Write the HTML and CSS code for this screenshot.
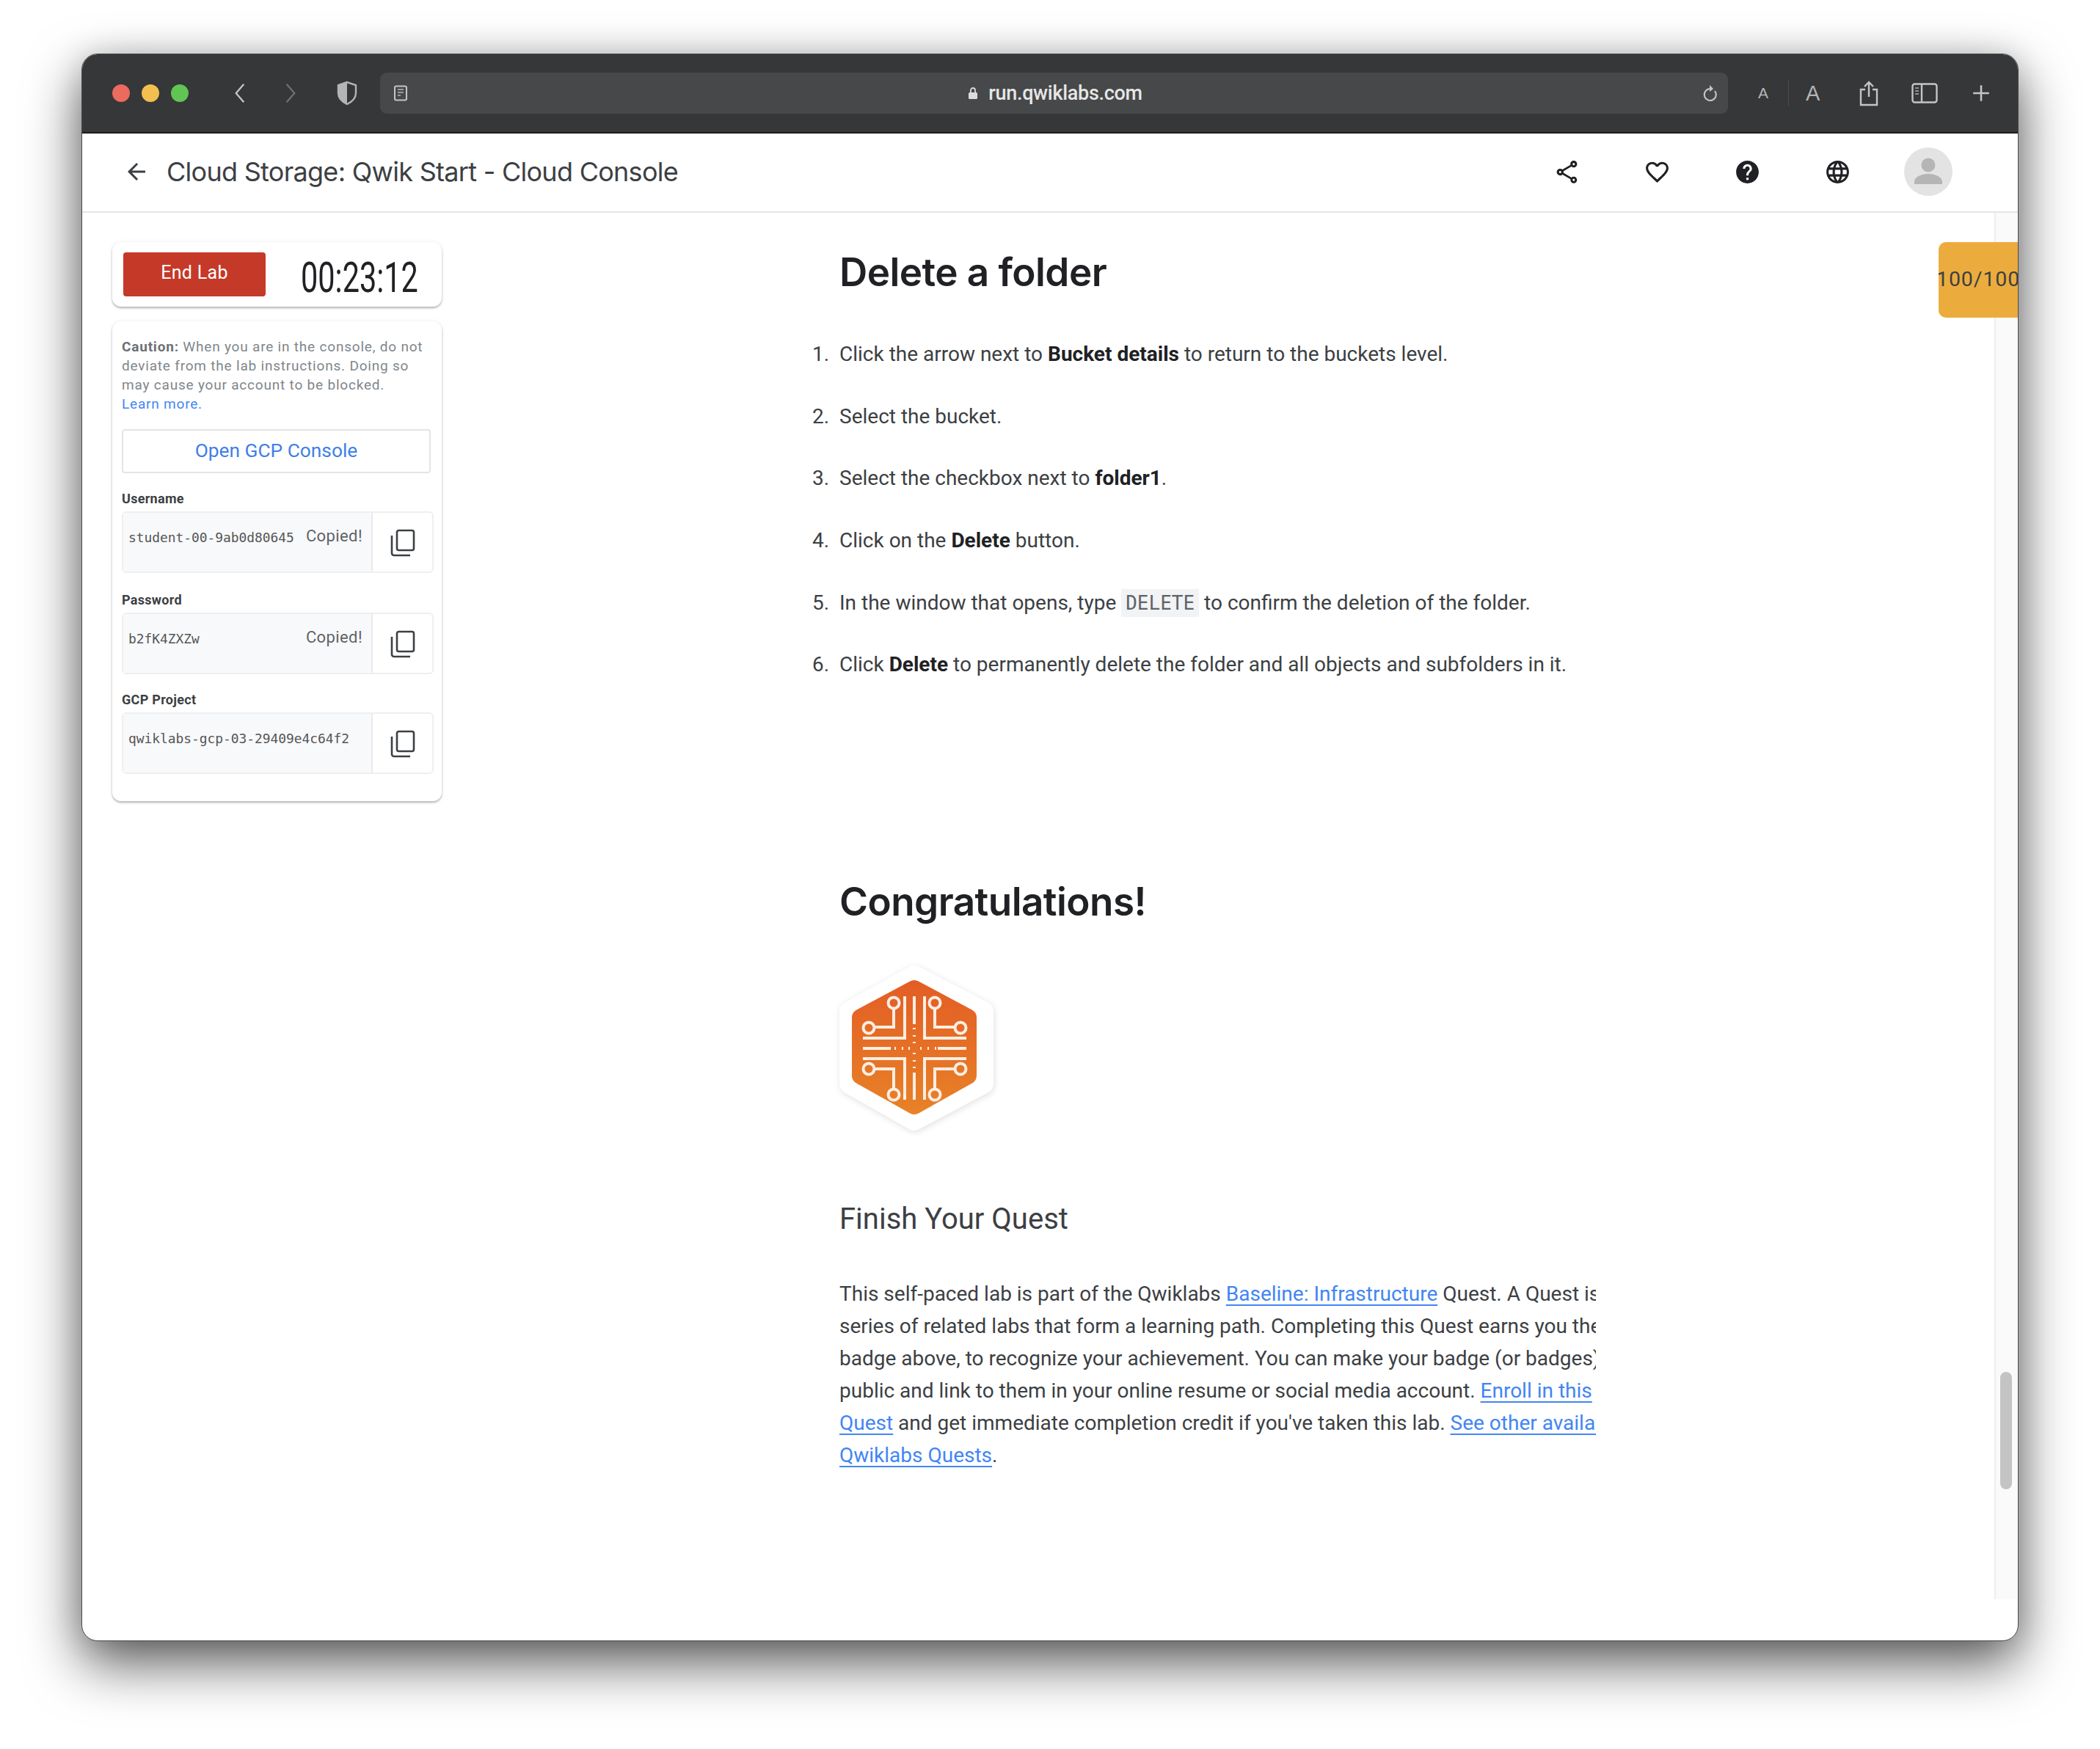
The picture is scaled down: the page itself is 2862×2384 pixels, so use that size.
FILE: index.html
```html
<!DOCTYPE html>
<html lang="en">
<head>
    <meta charset="UTF-8">
    <title>Cloud Storage: Qwik Start - Cloud Console</title>
    <link rel="stylesheet" href="styles.css">
</head>
<body>
<div class="window">
    <!-- Safari toolbar -->
    <div class="toolbar">
        <div class="lights">
            <span class="light red"></span>
            <span class="light yellow"></span>
            <span class="light green"></span>
        </div>
        <svg class="nav-btn" viewBox="0 0 20 34"><path d="M16 3 4 17l12 14" fill="none" stroke="#c4c5c6" stroke-width="2.6"/></svg>
        <svg class="nav-btn next" viewBox="0 0 20 34"><path d="M4 3l12 14L4 31" fill="none" stroke="#6e6f70" stroke-width="2.6"/></svg>
        <svg class="shield" viewBox="0 0 30 34"><path d="M15 2 3 6v11c0 8 6 12 12 15 6-3 12-7 12-15V6z" fill="none" stroke="#b4b5b6" stroke-width="2.4"/><path d="M15 2 3 6v11c0 8 6 12 12 15z" fill="#b4b5b6"/></svg>
        <div class="address">
            <svg class="reader" viewBox="0 0 20 22"><rect x="2" y="1.5" width="16" height="19" rx="2" fill="none" stroke="#c4c5c6" stroke-width="2"/><path d="M6 6h8M6 10h8M6 14h4" stroke="#9a9b9c" stroke-width="2"/></svg>
            <div class="url">
                <svg class="lock" viewBox="0 0 14 18"><path d="M4 8V5a3 3 0 0 1 6 0v3" fill="none" stroke="#dcdcdc" stroke-width="1.8"/><rect x="1" y="8" width="12" height="9" rx="1.5" fill="#dcdcdc"/></svg>
                <span>run.qwiklabs.com</span>
            </div>
            <svg class="reload" viewBox="0 0 22 24"><path d="M17 9a8 8 0 1 1-6-3" fill="none" stroke="#c4c5c6" stroke-width="2"/><path d="M10 1l5 5-5 4z" fill="#c4c5c6"/></svg>
        </div>
        <span class="font-small">A</span>
        <span class="tool-divider"></span>
        <span class="font-large">A</span>
        <svg class="tool-share" viewBox="0 0 28 36"><path d="M9 13H3v21h22V13h-6" fill="none" stroke="#c4c5c6" stroke-width="2.4"/><path d="M14 23V3M8 9l6-6 6 6" fill="none" stroke="#c4c5c6" stroke-width="2.4"/></svg>
        <svg class="tool-sidebar" viewBox="0 0 36 28"><rect x="1.5" y="1.5" width="33" height="25" rx="3" fill="none" stroke="#c4c5c6" stroke-width="2.4"/><path d="M14 2v24" stroke="#c4c5c6" stroke-width="2.4"/><path d="M5 7h5M5 11h5M5 15h5" stroke="#8f9091" stroke-width="2"/></svg>
        <svg class="tool-plus" viewBox="0 0 24 24"><path d="M12 2v20M2 12h20" stroke="#c4c5c6" stroke-width="2.4"/></svg>
    </div>

    <!-- lab header -->
    <header class="appbar">
        <svg class="back" viewBox="0 0 24 24"><path d="M20 11H7.83l5.59-5.59L12 4l-8 8 8 8 1.41-1.41L7.83 13H20v-2z"/></svg>
        <div class="lab-title">Cloud Storage: Qwik Start - Cloud Console</div>
        <div class="app-actions">
            <svg class="app-icon" viewBox="0 0 24 24"><path d="M18 16.08c-.76 0-1.44.3-1.96.77L8.91 12.7c.05-.23.09-.46.09-.7s-.04-.47-.09-.7l7.05-4.11c.54.5 1.25.81 2.04.81 1.66 0 3-1.34 3-3s-1.34-3-3-3-3 1.34-3 3c0 .24.04.47.09.7L8.04 9.81C7.5 9.31 6.79 9 6 9c-1.66 0-3 1.34-3 3s1.34 3 3 3c.79 0 1.5-.31 2.04-.81l7.12 4.16c-.05.21-.08.43-.08.65 0 1.61 1.31 2.92 2.92 2.92s2.92-1.31 2.92-2.92-1.31-2.92-2.92-2.92zM18 4c.55 0 1 .45 1 1s-.45 1-1 1-1-.45-1-1 .45-1 1-1zM6 13c-.55 0-1-.45-1-1s.45-1 1-1 1 .45 1 1-.45 1-1 1zm12 7.02c-.55 0-1-.45-1-1s.45-1 1-1 1 .45 1 1-.45 1-1 1z"/></svg>
            <svg class="app-icon" viewBox="0 0 24 24"><path d="M16.5 3c-1.74 0-3.41.81-4.5 2.09C10.91 3.81 9.24 3 7.5 3 4.42 3 2 5.42 2 8.5c0 3.78 3.4 6.86 8.55 11.54L12 21.35l1.45-1.32C18.6 15.36 22 12.28 22 8.5 22 5.42 19.58 3 16.5 3zm-4.4 15.55l-.1.1-.1-.1C7.14 14.24 4 11.39 4 8.5 4 6.5 5.5 5 7.5 5c1.54 0 3.04.99 3.57 2.36h1.87C13.46 5.99 14.96 5 16.5 5c2 0 3.5 1.5 3.5 3.5 0 2.89-3.14 5.74-7.9 10.05z"/></svg>
            <svg class="app-icon" viewBox="0 0 24 24"><path d="M12 2C6.48 2 2 6.48 2 12s4.48 10 10 10 10-4.48 10-10S17.52 2 12 2zm1 17h-2v-2h2v2zm2.07-7.75l-.9.92C13.45 12.9 13 13.5 13 15h-2v-.5c0-1.1.45-2.1 1.17-2.83l1.24-1.26c.37-.36.59-.86.59-1.41 0-1.1-.9-2-2-2s-2 .9-2 2H8c0-2.21 1.79-4 4-4s4 1.79 4 4c0 .88-.36 1.68-.93 2.25z"/></svg>
            <svg class="app-icon" viewBox="0 0 24 24"><path d="M11.99 2C6.47 2 2 6.48 2 12s4.47 10 9.99 10C17.52 22 22 17.52 22 12S17.52 2 11.99 2zm6.93 6h-2.95c-.32-1.25-.78-2.45-1.38-3.56 1.84.63 3.37 1.91 4.33 3.56zM12 4.04c.83 1.2 1.48 2.53 1.91 3.96h-3.82c.43-1.43 1.08-2.76 1.91-3.96zM4.26 14C4.1 13.36 4 12.69 4 12s.1-1.36.26-2h3.38c-.08.66-.14 1.32-.14 2 0 .68.06 1.34.14 2H4.26zm.82 2h2.95c.32 1.25.78 2.45 1.38 3.56-1.84-.63-3.37-1.9-4.33-3.56zm2.95-8H5.08c.96-1.66 2.49-2.93 4.33-3.56C8.81 5.55 8.35 6.75 8.03 8zM12 19.96c-.83-1.2-1.48-2.53-1.91-3.96h3.82c-.43 1.43-1.08 2.76-1.91 3.96zM14.34 14H9.66c-.09-.66-.16-1.32-.16-2 0-.68.07-1.35.16-2h4.68c.09.65.16 1.32.16 2 0 .68-.07 1.34-.16 2zm.25 5.56c.6-1.11 1.06-2.31 1.38-3.56h2.95c-.96 1.65-2.49 2.93-4.33 3.56zM16.36 14c.08-.66.14-1.32.14-2 0-.68-.06-1.34-.14-2h3.38c.16.64.26 1.31.26 2s-.1 1.36-.26 2h-3.38z"/></svg>
            <svg class="avatar" viewBox="0 0 66 66"><circle cx="33" cy="33" r="33" fill="#e3e3e3"/><circle cx="33" cy="24" r="9.5" fill="#b5b5b5"/><path d="M14 47c0-8 12-11 19-11s19 3 19 11v3H14z" fill="#b5b5b5"/></svg>
        </div>
    </header>

    <div class="page">
        <aside class="sidebar">
            <div class="card timer-card">
                <button class="end-lab">End Lab</button>
                <div class="timer">00:23:12</div>
            </div>
            <div class="card creds-card">
                <p class="caution"><b>Caution:</b> When you are in the console, do not deviate from the lab instructions. Doing so may cause your account to be blocked. <a href="#">Learn more.</a></p>
                <button class="open-console">Open GCP Console</button>

                <label class="field-label">Username</label>
                <div class="field">
                    <div class="field-value"><code>student-00-9ab0d80645</code><span class="copied">Copied!</span></div>
                    <div class="field-copy"><svg class="copy-icon" viewBox="0 0 34 38"><rect x="9" y="2" width="23" height="27" rx="2.5"/><path d="M2 9v24a3 3 0 0 0 3 3h22"/></svg></div>
                </div>

                <label class="field-label">Password</label>
                <div class="field">
                    <div class="field-value"><code>b2fK4ZXZw</code><span class="copied">Copied!</span></div>
                    <div class="field-copy"><svg class="copy-icon" viewBox="0 0 34 38"><rect x="9" y="2" width="23" height="27" rx="2.5"/><path d="M2 9v24a3 3 0 0 0 3 3h22"/></svg></div>
                </div>

                <label class="field-label tight">GCP Project</label>
                <div class="field">
                    <div class="field-value"><code>qwiklabs-gcp-03-29409e4c64f2</code></div>
                    <div class="field-copy"><svg class="copy-icon" viewBox="0 0 34 38"><rect x="9" y="2" width="23" height="27" rx="2.5"/><path d="M2 9v24a3 3 0 0 0 3 3h22"/></svg></div>
                </div>
            </div>
        </aside>

        <main class="content">
            <h2 class="section-title">Delete a folder</h2>
            <ol class="steps">
                <li>Click the arrow next to <b>Bucket details</b> to return to the buckets level.</li>
                <li>Select the bucket.</li>
                <li>Select the checkbox next to <b>folder1</b>.</li>
                <li>Click on the <b>Delete</b> button.</li>
                <li>In the window that opens, type <code class="inline-code">DELETE</code> to confirm the deletion of the folder.</li>
                <li>Click <b>Delete</b> to permanently delete the folder and all objects and subfolders in it.</li>
            </ol>

            <h2 class="section-title congrats">Congratulations!</h2>
            <svg class="badge" viewBox="0 0 260 260">
                <defs>
                    <linearGradient id="badgeFill" gradientUnits="userSpaceOnUse" x1="0" y1="37" x2="0" y2="220">
                        <stop offset="0" stop-color="#e35d25"/>
                        <stop offset="1" stop-color="#e88227"/>
                    </linearGradient>
                </defs>
                <path class="badge-shell" d="M127 31 221 80V178L127 228 39 178V80Z"/>
                <path class="badge-hex" d="M127 49 200 88V167L127 208 54 167V88Z"/>
                <g class="badge-lines">
                    <path d="M127 59V97M127 163V200M57 130H95M159 130H198"/>
                    <path d="M127 102v2M127 112v2M127 121v2M127 136v2M127 146v2M127 155v2M100 130h2M110 130h2M119 130h2M135 130h2M145 130h2M155 130h2"/>
                    <path d="M114 59V116H57M141 59V116H198M57 144H114V200M198 144H141V200"/>
                    <path d="M99 75V101H72M155 75V101H183M72 158H99V186M183 158H155V186"/>
                    <circle cx="99" cy="68" r="7.5"/><circle cx="155" cy="68" r="7.5"/>
                    <circle cx="65" cy="102" r="7.5"/><circle cx="190" cy="102" r="7.5"/>
                    <circle cx="65" cy="158" r="7.5"/><circle cx="190" cy="158" r="7.5"/>
                    <circle cx="99" cy="193" r="7.5"/><circle cx="155" cy="193" r="7.5"/>
                </g>
            </svg>
            <h3 class="quest-title">Finish Your Quest</h3>
            <p class="quest-text">This self-paced lab is part of the Qwiklabs <a href="#">Baseline: Infrastructure</a> Quest. A Quest is a<br>
                series of related labs that form a learning path. Completing this Quest earns you the<br>
                badge above, to recognize your achievement. You can make your badge (or badges)<br>
                public and link to them in your online resume or social media account. <a href="#">Enroll in this</a><br>
                <a href="#">Quest</a> and get immediate completion credit if you've taken this lab. <a href="#">See other available</a><br>
                <a href="#">Qwiklabs Quests</a>.</p>
        </main>

        <div class="scroll-track"><div class="scroll-thumb"></div></div>
        <div class="score-tab">100/100</div>
    </div>
</div>
</body>
</html>
```

FILE: styles.css
```css
* {
    box-sizing: border-box;
}
html, body {
    margin: 0;
    height: 100%;
}
body {
    background-color: #fff;
    padding: 73px 111px 0;
    font-family: Roboto, "Liberation Sans", sans-serif;
    color: #3c4043;
    overflow: hidden;
}
.window {
    height: 2164px;
    display: flex;
    flex-direction: column;
    background-color: #fff;
    border: 1px solid #4a4a4a;
    border-radius: 22px;
    box-shadow: 0 30px 75px rgba(0,0,0,0.65), 0 0 40px rgba(0,0,0,0.12);
    overflow: hidden;
}

/* browser toolbar */
.toolbar {
    height: 108px;
    flex: none;
    display: flex;
    align-items: center;
    background-color: #363738;
    border-bottom: 2px solid #1d1d1e;
    padding-left: 41px;
    position: relative;
}
.lights {
    display: flex;
    gap: 16px;
}
.light {
    width: 24px;
    height: 24px;
    border-radius: 50%;
}
.red { background-color: #ec6a5e; }
.yellow { background-color: #f4bf4f; }
.green { background-color: #61c554; }
.nav-btn {
    width: 20px;
    height: 30px;
    margin-left: 60px;
}
.nav-btn.next {
    margin-left: 49px;
}
.shield {
    width: 30px;
    height: 34px;
    margin-left: 52px;
}
.address {
    width: 1837px;
    height: 56px;
    margin-left: 30px;
    display: flex;
    align-items: center;
    justify-content: space-between;
    background-color: #474849;
    border-radius: 9px;
    padding: 0 13px 0 18px;
}
.reader {
    width: 20px;
    height: 22px;
}
.reload {
    width: 22px;
    height: 24px;
}
.url {
    display: flex;
    align-items: center;
    gap: 14px;
    color: #e6e6e6;
    font-size: 27px;
    font-weight: 500;
    letter-spacing: -0.3px;
}
.lock {
    width: 14px;
    height: 18px;
}
.font-small,
.font-large {
    color: #b4b5b6;
    font-family: "Liberation Sans", sans-serif;
}
.font-small {
    font-size: 21px;
    margin-left: 41px;
}
.tool-divider {
    width: 1px;
    height: 36px;
    background-color: #4b4c4d;
    margin-left: 27px;
}
.font-large {
    font-size: 29px;
    margin-left: 23px;
}
.tool-share {
    width: 28px;
    height: 36px;
    margin-left: 53px;
}
.tool-sidebar {
    width: 36px;
    height: 28px;
    margin-left: 44px;
}
.tool-plus {
    width: 26px;
    height: 26px;
    margin-left: 46px;
}

/* lab header */
.appbar {
    height: 108px;
    flex: none;
    display: flex;
    align-items: center;
    border-bottom: 2px solid #e4e5e6;
    padding: 0 0 2px 56px;
}
.back {
    width: 36px;
    height: 36px;
    fill: #3c4043;
}
.lab-title {
    margin-left: 23px;
    font-family: Inter, Roboto, sans-serif;
    font-size: 36px;
    letter-spacing: -0.72px;
    color: #3c4043;
}
.app-actions {
    margin-left: auto;
    margin-right: 89px;
    display: flex;
    align-items: center;
    gap: 86px;
}
.app-icon {
    width: 37px;
    height: 37px;
    fill: #202124;
}
.avatar {
    width: 66px;
    height: 66px;
    margin-left: -14px;
}

/* page body */
.page {
    flex: 1;
    display: flex;
    position: relative;
    min-height: 0;
}
.sidebar {
    width: 449px;
    flex: none;
    margin-left: 41px;
    padding-top: 40px;
}
.card {
    background-color: #fff;
    border-radius: 12px;
    box-shadow: 0 2px 3px rgba(0,0,0,0.28), 0 0 6px rgba(0,0,0,0.06);
}
.timer-card {
    height: 88px;
    display: flex;
    align-items: center;
    padding-left: 15px;
}
.end-lab {
    width: 194px;
    height: 60px;
    flex: none;
    background-color: #c53929;
    color: #fff;
    border: none;
    border-radius: 4px;
    font-family: Roboto, sans-serif;
    font-size: 25px;
    letter-spacing: 0.3px;
    padding-bottom: 7px;
}
.timer {
    margin-left: 48px;
    margin-top: 8px;
    font-size: 58px;
    line-height: 60px;
    color: #202124;
    transform: scaleX(0.715);
    transform-origin: left center;
}
.creds-card {
    margin-top: 20px;
    height: 654px;
    padding: 22px 13px 0;
}
.caution {
    margin: 0;
    font-size: 19px;
    line-height: 26px;
    color: #80868b;
    letter-spacing: 0.8px;
    width: 424px;
}
.caution b {
    color: #6b7074;
}
.caution a {
    color: #4285f4;
    text-decoration: none;
    display: block;
}
.open-console {
    display: block;
    width: 421px;
    height: 60px;
    margin-top: 21px;
    padding-bottom: 4px;
    background-color: #fff;
    color: #3f7fe8;
    border: 2px solid #e3e4e6;
    border-radius: 4px;
    font-family: Roboto, sans-serif;
    font-size: 26.3px;
}
.field-label {
    display: block;
    margin-top: 24px;
    height: 28px;
    line-height: 22px;
    font-size: 18px;
    letter-spacing: 0.3px;
    font-weight: 700;
    color: #3c4043;
}
.creds-card .field + .field-label {
    margin-top: 26px;
}
.creds-card .field + .field-label.tight {
    margin-top: 24px;
}
.field {
    width: 425px;
    height: 84px;
    display: flex;
    border: 2px solid #eeeff0;
    border-radius: 6px;
}
.field-value {
    flex: 1;
    display: flex;
    justify-content: space-between;
    background-color: #f8f9fa;
    border-right: 2px solid #e8eaed;
    padding: 23px 12px 0 7px;
}
.field-value code {
    font-family: "DejaVu Sans Mono", monospace;
    font-size: 17.9px;
    line-height: 22px;
    letter-spacing: -0.02px;
    color: #555;
    white-space: nowrap;
}
.copied {
    font-size: 22px;
    line-height: 18px;
    color: #5f6368;
    letter-spacing: 0.4px;
    white-space: nowrap;
}
.field-copy {
    width: 81px;
    flex: none;
    display: flex;
    justify-content: center;
    padding-top: 22px;
}
.copy-icon {
    width: 34px;
    height: 38px;
    fill: none;
    stroke: #3c4043;
    stroke-width: 2.6;
}

/* lab instructions */
.content {
    margin-left: 542px;
    width: 1031px;
    flex: none;
}
.section-title {
    margin: 51px 0 0;
    font-family: Inter, Roboto, sans-serif;
    font-size: 53px;
    line-height: 60px;
    font-weight: 600;
    color: #202124;
    letter-spacing: -0.55px;
}
.steps {
    margin: 60px 0 0;
    padding: 0;
    font-size: 28px;
    line-height: 44px;
    color: #3c4043;
}
.steps li {
    margin-bottom: 40.7px;
}
.steps li::marker {
    content: counter(list-item) ".\00a0\00a0";
}
.steps b {
    color: #202124;
    font-weight: 700;
}
.inline-code {
    font-family: "DejaVu Sans Mono", monospace;
    font-size: 26px;
    background-color: #f1f3f4;
    padding: 4px 6px;
    color: #5f6368;
}
.congrats {
    margin-top: 271px;
}
.badge {
    display: block;
    width: 260px;
    height: 260px;
    margin: 40px 0 0 -25px;
}
.badge-shell {
    fill: #fff;
    stroke: #fff;
    stroke-width: 28;
    stroke-linejoin: round;
    filter: drop-shadow(1px 2px 4px rgba(0,0,0,0.12));
}
.badge-hex {
    fill: url(#badgeFill);
    stroke: url(#badgeFill);
    stroke-width: 24;
    stroke-linejoin: round;
}
.badge-lines {
    fill: none;
    stroke: #fbeee2;
    stroke-width: 4;
}
.quest-title {
    margin: 78px 0 0;
    font-size: 40px;
    line-height: 50px;
    font-weight: 400;
    color: #3c4043;
}
.quest-text {
    margin: 55px 0 0;
    font-size: 28px;
    line-height: 44px;
    color: #3c4043;
    white-space: nowrap;
    overflow: hidden;
}
.quest-text a {
    color: #4285f4;
    text-decoration: underline;
    text-decoration-thickness: 2px;
    text-underline-offset: 5px;
}

/* scrollbar + score tab */
.scroll-track {
    margin-left: auto;
    width: 32px;
    height: 1890px;
    background-color: #fafafa;
    border-left: 2px solid #eee;
    padding: 1580px 0 0 6px;
}
.scroll-thumb {
    width: 16px;
    height: 160px;
    background-color: #c4c4c4;
    border-radius: 8px;
}
.score-tab {
    position: absolute;
    top: 40px;
    right: 0;
    width: 108px;
    height: 103px;
    background-color: #ecac3d;
    border-radius: 10px 0 0 10px;
    font-size: 28.5px;
    line-height: 102px;
    letter-spacing: 0.9px;
    white-space: nowrap;
    overflow: hidden;
    color: #3c4043;
    text-indent: -3px;
}
```
